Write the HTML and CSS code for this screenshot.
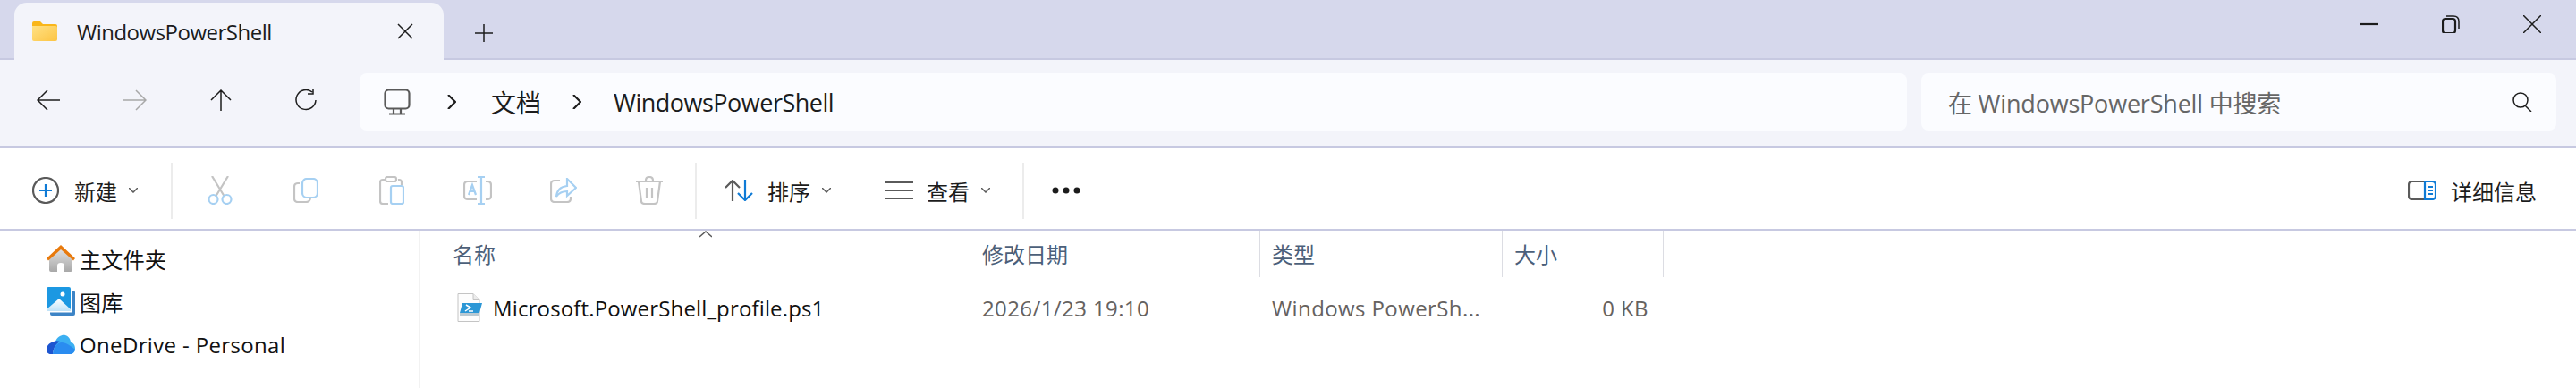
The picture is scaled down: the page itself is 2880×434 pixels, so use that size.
FILE: index.html
```html
<!DOCTYPE html>
<html lang="zh-CN">
<head>
    <meta charset="UTF-8">
    <title>WindowsPowerShell</title>
    <link rel="stylesheet" href="styles.css">
</head>
<body>

<!-- tab strip -->
<div class="titlebar">
    <div class="tab">
        <svg class="tab-folder" width="28" height="22" viewBox="0 0 28 22">
            <path d="M0 2q0-2 2-2h7l3 3h14q2 0 2 2v3H0z" fill="#f9b61a"/>
            <path d="M0 5h26q2 0 2 2v13q0 2-2 2H2q-2 0-2-2z" fill="url(#folderFill)"/>
            <defs>
                <linearGradient id="folderFill" x1="0" y1="0" x2="1" y2="1">
                    <stop offset="0" stop-color="#ffe184"/>
                    <stop offset="1" stop-color="#fcc443"/>
                </linearGradient>
            </defs>
        </svg>
        <span class="tab-title">WindowsPowerShell</span>
        <svg class="tab-close" width="18" height="18" viewBox="0 0 18 18"><path d="M1 1l16 16M17 1L1 17" class="line"/></svg>
    </div>
    <svg class="tab-add" width="20" height="20" viewBox="0 0 20 20"><path d="M10 0v20M0 10h20" class="line"/></svg>
    <div class="window-buttons">
        <svg width="20" height="20" viewBox="0 0 20 20"><path d="M0 10h20" class="line thick"/></svg>
        <svg width="20" height="20" viewBox="0 0 20 20"><rect x="1" y="4" width="14" height="16" rx="3" class="line thick"/><path d="M5 1h8q6 0 6 6v8" class="line"/></svg>
        <svg width="20" height="20" viewBox="0 0 20 20"><path d="M0 0l20 20M20 0L0 20" class="line"/></svg>
    </div>
</div>

<!-- back / forward and address row -->
<div class="navbar">
    <div class="nav-buttons">
        <svg width="26" height="24" viewBox="0 0 26 24"><path d="M26 12H1M12 1L1 12l11 11" class="line"/></svg>
        <svg class="disabled" width="26" height="24" viewBox="0 0 26 24"><path d="M0 12h25M14 1l11 11-11 11" class="line"/></svg>
        <svg width="24" height="24" viewBox="0 0 24 24"><path d="M12 24V1M1 12L12 1l11 11" class="line"/></svg>
        <svg width="24" height="24" viewBox="0 0 24 24"><path d="M19 3a11 11 0 1 0 4 9M20 0v5h-6" class="line"/></svg>
    </div>
    <div class="address">
        <svg class="monitor" width="30" height="30" viewBox="0 0 30 30"><rect x="1.5" y="1.5" width="27" height="21" rx="4" class="line thick grey"/><path d="M11 23v5M19 23v5M6 28.500h18" class="line thick grey"/></svg>
        <svg class="crumb-sep" width="10" height="16" viewBox="0 0 10 16"><path d="M1 0l8 8-8 8" class="line thick"/></svg>
        <span class="crumb crumb-cn">文档</span>
        <svg class="crumb-sep" width="10" height="16" viewBox="0 0 10 16"><path d="M1 0l8 8-8 8" class="line thick"/></svg>
        <span class="crumb">WindowsPowerShell</span>
    </div>
    <div class="search">
        <span class="search-text">在 WindowsPowerShell 中搜索</span>
        <svg width="22" height="22" viewBox="0 0 22 22"><circle cx="9" cy="9" r="8" class="line"/><path d="M14 15l7 7" class="line"/></svg>
    </div>
</div>

<!-- command bar -->
<div class="toolbar">
    <div class="tool tool-new">
        <svg width="30" height="30" viewBox="0 0 30 30"><circle cx="15" cy="15" r="14" class="line thick grey"/><path d="M15 8v14M8 15h14" class="line thick blue"/></svg>
        <span>新建</span>
        <svg class="caret" width="10" height="6" viewBox="0 0 10 6"><path d="M0 0l5 5 5-5" class="line grey"/></svg>
    </div>
    <div class="toolbar-sep"></div>
    <div class="tool-group">
        <div class="tool-slot"><svg width="28" height="32" viewBox="0 0 28 32"><path d="M5 0l14 23M23 0L9 23" class="line thick dim"/><circle cx="6.500" cy="26" r="5" class="line thick pale"/><circle cx="21.500" cy="26" r="5" class="line thick pale"/></svg></div>
        <div class="tool-slot"><svg width="28" height="28" viewBox="0 0 28 28"><path d="M7 6H5q-4 0-4 4v13q0 4 4 4h9q4 0 5-4" class="line thick dim"/><rect x="10" y="1" width="17" height="21" rx="5" class="line thick pale"/></svg></div>
        <div class="tool-slot"><svg width="28" height="32" viewBox="0 0 28 32"><path d="M7 4H4q-3 0-3 3v21q0 3 3 3h6M21 4h1q3 0 3 3v3" class="line thick dim"/><rect x="7" y="1" width="12" height="5" rx="2" class="line thick dim"/><rect x="13" y="11" width="14" height="20" rx="2" class="line thick pale"/></svg></div>
        <div class="tool-slot"><svg width="32" height="32" viewBox="0 0 32 32"><path d="M15 6H5q-4 0-4 4v12q0 4 4 4h10M25 6h2q4 0 4 4v12q0 4-4 4h-2" class="line thick dim"/><path d="M20 1v30M16 1h8M16 31h8M6 21l4-11 4 11M7.500 17h5" class="line thick pale"/></svg></div>
        <div class="tool-slot"><svg width="30" height="28" viewBox="0 0 30 28"><path d="M11 3H5Q1 3 1 7v16q0 4 4 4h14q4 0 4-4v-2" class="line thick dim"/><path d="M19 1l10 10-10 9v-5q-8 0-12 6 1-11 12-12z" class="line thick pale"/></svg></div>
        <div class="tool-slot"><svg width="30" height="32" viewBox="0 0 30 32"><path d="M0 6h30M11 5q0-4 4-4t4 4M3 6l3 22q0 3 4 3h10q4 0 4-3l3-22M12 13v11M18 13v11" class="line thick dim"/></svg></div>
    </div>
    <div class="toolbar-sep"></div>
    <div class="tool tool-sort">
        <svg width="32" height="24" viewBox="0 0 32 24"><path d="M9 24V1M1 9l8-8 8 8" class="line thick grey"/><path d="M23 0v23M15 15l8 8 8-8" class="line thick blue"/></svg>
        <span>排序</span>
        <svg class="caret" width="10" height="6" viewBox="0 0 10 6"><path d="M0 0l5 5 5-5" class="line grey"/></svg>
    </div>
    <div class="tool tool-view">
        <svg width="32" height="20" viewBox="0 0 32 20"><path d="M0 1h32M0 10h32M0 19h32" class="line thick grey"/></svg>
        <span>查看</span>
        <svg class="caret" width="10" height="6" viewBox="0 0 10 6"><path d="M0 0l5 5 5-5" class="line grey"/></svg>
    </div>
    <div class="toolbar-sep sep-more"></div>
    <svg class="more" width="32" height="8" viewBox="0 0 32 8"><circle cx="4" cy="4" r="3.500"/><circle cx="16" cy="4" r="3.500"/><circle cx="28" cy="4" r="3.500"/></svg>
    <div class="tool tool-details">
        <svg width="32" height="22" viewBox="0 0 32 22"><path d="M19 1H5Q1 1 1 5v12q0 4 4 4h14" class="line thick grey"/><path d="M19 1h8q4 0 4 4v12q0 4-4 4h-8zM23 7h5M23 11h5M23 15h5" class="line thick blue"/></svg>
        <span>详细信息</span>
    </div>
</div>

<div class="content">
    <!-- left navigation pane -->
    <div class="sidebar">
        <div class="side-item item-home">
            <svg width="32" height="30" viewBox="0 0 32 30">
                <defs>
                    <linearGradient id="houseFill" x1="0" y1="0" x2="0" y2="1">
                        <stop offset="0" stop-color="#e4e4e4"/>
                        <stop offset="1" stop-color="#a8a8a8"/>
                    </linearGradient>
                </defs>
                <path d="M3 14L16 3l13 11v14q0 2-2 2h-7v-7q0-3-4-3t-4 3v7H5q-2 0-2-2z" fill="url(#houseFill)"/>
                <path d="M16 0L32 15l-2 2.500L16 5 2 17.500 0 15z" fill="#e87a0d"/>
            </svg>
            <span>主文件夹</span>
        </div>
        <div class="side-item item-gallery">
            <svg width="32" height="32" viewBox="0 0 32 32">
                <defs>
                    <linearGradient id="hillFill" x1="0" y1="0" x2="0" y2="1">
                        <stop offset="0" stop-color="#ffffff"/>
                        <stop offset="1" stop-color="#bfe2f8"/>
                    </linearGradient>
                </defs>
                <path d="M28.500 4H30q2 0 2 2v24q0 2-2 2H6q-2 0-2-2v-1.500h24.500z" fill="#3d84c6"/>
                <rect width="27" height="27" rx="2" fill="#1c98e2"/>
                <circle cx="18" cy="8" r="2.500" fill="#fff"/>
                <path d="M0 25l14-12 13 12v2H0z" fill="url(#hillFill)"/>
            </svg>
            <span>图库</span>
        </div>
        <div class="side-item item-onedrive">
            <svg width="32" height="22" viewBox="0 0 32 22">
                <path d="M10 8C12 2 18 0 21 1c4 1 6 5 6 8 3 0 5 3 5 7s-3 6-6 6H7z" fill="#3cb0f2"/>
                <path d="M0 17c0-5 4-8 8-9 2-1 5-1 7 0-4 2-7 6-8 14H5c-3 0-5-2-5-5z" fill="#1d55d0"/>
                <path d="M7 22c1-8 5-13 10-13s10 4 15 8c-1 3-3 5-6 5z" fill="#2a8cf0"/>
            </svg>
            <span>OneDrive - Personal</span>
        </div>
    </div>

    <!-- file list -->
    <div class="files">
        <svg class="sort-arrow" width="14" height="8" viewBox="0 0 14 8"><path d="M0 7l7-6 7 6" class="line grey"/></svg>
        <div class="columns">
            <div class="col col-name">名称</div>
            <div class="col col-date">修改日期</div>
            <div class="col col-type">类型</div>
            <div class="col col-size">大小</div>
        </div>
        <div class="row">
            <div class="cell cell-name">
                <svg width="28" height="32" viewBox="0 0 28 32">
                    <path d="M1 .5h17l7 7v24H1z" fill="#fdfdfd" stroke="#c4c4c4"/>
                    <path d="M18 .5v7h7" fill="#ececec" stroke="#c4c4c4"/>
                    <path d="M6 11h22l-3 11H3z" fill="#2c97d6"/>
                    <path d="M3 22h22l-1 3H3z" fill="#b9c9d2"/>
                    <path d="M10 13l5 3-6 4M13 20h5" fill="none" stroke="#fff" stroke-width="1.500"/>
                </svg>
                <span class="file-name">Microsoft.PowerShell_profile.ps1</span>
            </div>
            <div class="cell cell-date">2026/1/23 19:10</div>
            <div class="cell cell-type">Windows PowerSh...</div>
            <div class="cell cell-size">0 KB</div>
        </div>
    </div>
</div>

</body>
</html>
```

FILE: styles.css
```css
html, body {
    margin: 0;
    height: 434px;
    overflow: hidden;
}

body {
    font-family: "Open Sans", "Noto Sans CJK SC", sans-serif;
    font-size: 24px;
    color: #1c1c1c;
    background-color: #fff;
}

.line {
    fill: none;
    stroke: #1c1c1c;
    stroke-width: 1.5;
}

.line.thick {
    stroke-width: 2.2;
}

.line.grey {
    stroke: #5a5a5a;
}

.line.blue {
    stroke: #0f7bd6;
}

.line.dim {
    stroke: #c4c4c4;
}

.line.pale {
    stroke: #a6d0f2;
}

/* tab strip */
.titlebar {
    display: flex;
    align-items: flex-end;
    height: 67px;
    box-sizing: border-box;
    padding-left: 16px;
    background-color: #d6d8ec;
    border-bottom: 2px solid #c7c9e1;
}

.tab {
    display: flex;
    align-items: center;
    width: 480px;
    height: 64px;
    margin-bottom: -2px;
    box-sizing: border-box;
    padding: 0 34px 0 20px;
    background-color: #f3f4fa;
    border-radius: 14px 14px 0 0;
}

.tab-folder {
    margin-right: 22px;
}

.tab-title {
    flex: 1;
    letter-spacing: -0.5px;
}

.tab-add {
    align-self: flex-start;
    margin: 27px 0 0 35px;
}

.window-buttons {
    display: flex;
    gap: 71px;
    align-self: flex-start;
    margin: 17px 39px 0 auto;
}

/* navigation row */
.navbar {
    display: flex;
    align-items: center;
    height: 98px;
    box-sizing: border-box;
    padding-left: 41px;
    padding-bottom: 2px;
    background-color: #f3f4fa;
    border-bottom: 2px solid #c7c9e1;
}

.nav-buttons {
    display: flex;
    align-items: center;
    gap: 71px;
    width: 361px;
    margin-bottom: 4px;
}

.disabled .line {
    stroke: #a8a8a8;
}

.address {
    display: flex;
    align-items: center;
    width: 1730px;
    height: 64px;
    margin-right: 16px;
    box-sizing: border-box;
    padding-left: 27px;
    background-color: #fbfcff;
    border-radius: 8px;
    font-size: 27px;
}

.crumb-sep {
    margin: 0 36px 0 35px;
}

.monitor + .crumb-sep {
    margin-left: 41px;
    margin-right: 39px;
}

.crumb {
    letter-spacing: -0.5px;
}

.crumb-cn {
    font-size: 28px;
    letter-spacing: 0;
}

.search {
    display: flex;
    align-items: center;
    justify-content: space-between;
    width: 710px;
    height: 64px;
    box-sizing: border-box;
    padding: 0 27px 0 30px;
    background-color: #fbfcff;
    border-radius: 8px;
}

.search-text {
    font-size: 27px;
    letter-spacing: -0.2px;
    color: #666;
}

/* command bar */
.toolbar {
    display: flex;
    align-items: center;
    height: 93px;
    box-sizing: border-box;
    padding-top: 5px;
    background-color: #fff;
    border-bottom: 2px solid #c7c9e1;
}

.toolbar-sep {
    flex: 0 0 2px;
    height: 63px;
    background-color: #ececec;
}

.tool {
    display: flex;
    align-items: center;
}

.tool-new {
    width: 155px;
    padding-left: 36px;
}

.tool-new span {
    margin-left: 17px;
}

.tool-new .caret {
    margin-left: 13px;
}

.tool-group {
    display: flex;
    width: 576px;
    margin: 0 3px 0 5px;
}

.tool-slot {
    display: flex;
    justify-content: center;
    align-items: center;
    width: 96px;
}

.tool-sort {
    margin-left: 31px;
}

.tool-sort span {
    margin-left: 16px;
}

.tool-sort .caret {
    margin-left: 13px;
}

.tool-view {
    margin-left: 60px;
}

.tool-view span {
    margin-left: 15px;
}

.tool-view .caret {
    margin-left: 13px;
}

.sep-more {
    margin-left: 36px;
}

.more {
    margin-left: 31px;
    fill: #1c1c1c;
}

.tool-details {
    margin-left: auto;
    margin-right: 44px;
}

.tool-details span {
    margin-left: 16px;
}

/* content */
.content {
    display: flex;
    height: 176px;
}

.sidebar {
    width: 470px;
    box-sizing: border-box;
    padding: 7px 0 0 52px;
    border-right: 2px solid #f2f2f2;
}

.side-item {
    display: flex;
    align-items: center;
    height: 48px;
    color: #111;
}

.side-item svg {
    margin-right: 5px;
}

.side-item span {
    letter-spacing: 0.35px;
}

.files {
    position: relative;
    flex: 1;
}

.sort-arrow {
    position: absolute;
    left: 312px;
    top: 0;
}

.columns {
    display: grid;
    grid-template-columns: 615px 324px 271px 180px;
    height: 52px;
}

.col {
    display: flex;
    align-items: center;
    padding-left: 36px;
    padding-bottom: 2px;
    box-sizing: border-box;
    color: #4c607a;
    border-right: 1px solid #dcdde3;
}

.col-name {
    padding-left: 36px;
}

.col-date, .col-type, .col-size {
    padding-left: 13px;
}

.row {
    display: grid;
    grid-template-columns: 615px 324px 271px 180px;
    align-items: center;
    height: 46px;
    margin-top: 11px;
}

.cell {
    color: #66625f;
    letter-spacing: 0.4px;
    white-space: nowrap;
}

.cell-name {
    display: flex;
    align-items: center;
    padding-left: 41px;
    color: #111;
    letter-spacing: 0.15px;
}

.file-name {
    margin-left: 12px;
}

.cell-date, .cell-type {
    padding-left: 13px;
}

.cell-size {
    padding-right: 17px;
    text-align: right;
}
```
